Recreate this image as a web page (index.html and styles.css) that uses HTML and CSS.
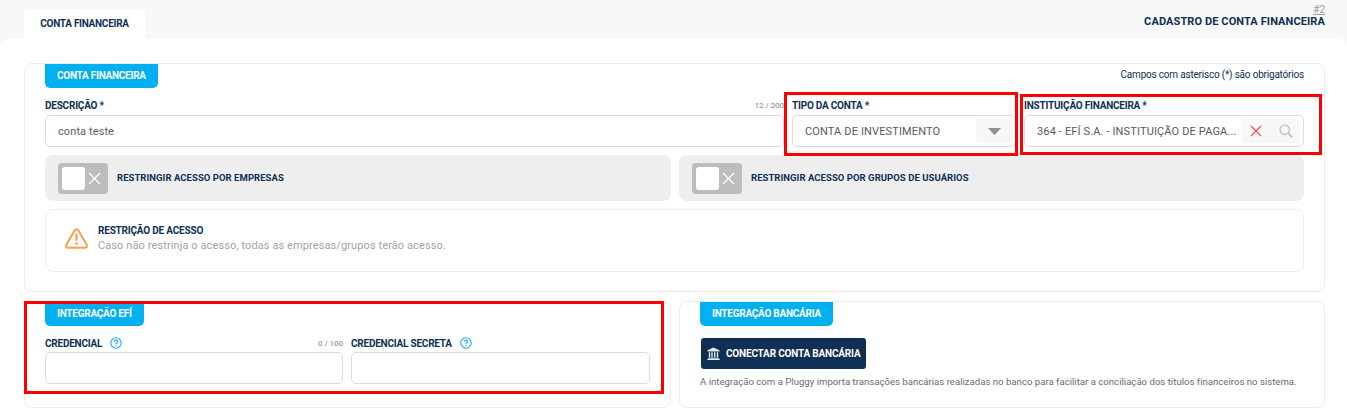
FILE: index.html
```html
<!DOCTYPE html>
<html lang="pt-BR">
<head>
<meta charset="utf-8">
<title>Cadastro de conta financeira</title>
<link rel="stylesheet" href="styles.css">
</head>
<body>
<div class="topbar">
  <div class="tab">CONTA FINANCEIRA</div>
  <div class="page-title">
    <a class="page-id">#2</a>
    <div class="page-name">CADASTRO DE CONTA FINANCEIRA</div>
  </div>
</div>
<main class="main">
  <section class="panel panel-account">
    <div class="panel-head">
      <div class="badge">CONTA FINANCEIRA</div>
      <div class="required-note">Campos com asterisco (*) são obrigatórios</div>
    </div>
    <div class="fields">
      <div class="field">
        <div class="label-row"><span class="label">DESCRIÇÃO *</span><span class="counter">12 / 200</span></div>
        <div class="input">conta teste</div>
      </div>
      <div class="field">
        <div class="label-row"><span class="label">TIPO DA CONTA *</span></div>
        <div class="input input-upper">
          <span class="value">CONTA DE INVESTIMENTO</span>
          <span class="select-arrow"><svg width="13" height="7" viewBox="0 0 13 7"><path d="M0 0h13L6.5 7z" fill="#8f8f8f"/></svg></span>
        </div>
      </div>
      <div class="field">
        <div class="label-row"><span class="label">INSTITUIÇÃO FINANCEIRA *</span></div>
        <div class="input input-upper input-bank">
          <span class="value">364 - EFÍ S.A. - INSTITUIÇÃO DE PAGA...</span>
          <span class="actions">
            <svg width="12" height="12" viewBox="0 0 12 12"><path d="M1 1l10 10M11 1L1 11" stroke="#f5545c" stroke-width="1.3" fill="none"/></svg>
            <svg width="14" height="14" viewBox="0 0 14 14"><circle cx="5.7" cy="5.7" r="4.7" stroke="#b5b5b5" stroke-width="1.1" fill="none"/><path d="M9.2 9.2l4 4" stroke="#b5b5b5" stroke-width="1.6"/></svg>
          </span>
        </div>
      </div>
    </div>
    <div class="toggles">
      <div class="toggle-row">
        <div class="switch"><span class="knob"></span><svg width="13" height="13" viewBox="0 0 13 13"><path d="M1 1l11 11M12 1L1 12" stroke="#fff" stroke-width="1.2"/></svg></div>
        <span class="toggle-label">RESTRINGIR ACESSO POR EMPRESAS</span>
      </div>
      <div class="toggle-row">
        <div class="switch"><span class="knob"></span><svg width="13" height="13" viewBox="0 0 13 13"><path d="M1 1l11 11M12 1L1 12" stroke="#fff" stroke-width="1.2"/></svg></div>
        <span class="toggle-label">RESTRINGIR ACESSO POR GRUPOS DE USUÁRIOS</span>
      </div>
    </div>
    <div class="notice">
      <svg class="notice-icon" width="23" height="21" viewBox="0 0 23 21"><path d="M9.8 2.3Q11.5 0 13.2 2.3L21.6 16.6Q22.7 19.6 19.8 19.8H3.2Q.3 19.6 1.4 16.6Z" fill="none" stroke="#f8a050" stroke-width="2" stroke-linejoin="round"/><path d="M11.5 6.5v5.5" stroke="#f8a050" stroke-width="2.2" stroke-linecap="round"/><circle cx="11.5" cy="15.5" r="1.3" fill="#f8a050"/></svg>
      <div>
        <div class="notice-title">RESTRIÇÃO DE ACESSO</div>
        <div class="notice-text">Caso não restrinja o acesso, todas as empresas/grupos terão acesso.</div>
      </div>
    </div>
  </section>
  <div class="lower">
    <section class="panel panel-lower">
      <div class="badge">INTEGRAÇÃO EFÍ</div>
      <div class="cred-grid">
        <div class="field">
          <div class="label-row label-row-cred"><span class="label">CREDENCIAL<svg class="help" width="12" height="12" viewBox="0 0 12 12"><circle cx="6" cy="6" r="5.2" fill="none" stroke="#16aeea" stroke-width="1.1"/><path d="M4.4 4.6Q4.5 3.1 6 3.1T7.7 4.5Q7.7 5.3 6.9 5.8T6 7.2" fill="none" stroke="#16aeea" stroke-width="1.1"/><circle cx="6" cy="8.9" r=".7" fill="#16aeea"/></svg></span><span class="counter">0 / 100</span></div>
          <div class="input"></div>
        </div>
        <div class="field">
          <div class="label-row label-row-cred"><span class="label">CREDENCIAL SECRETA<svg class="help" width="12" height="12" viewBox="0 0 12 12"><circle cx="6" cy="6" r="5.2" fill="none" stroke="#16aeea" stroke-width="1.1"/><path d="M4.4 4.6Q4.5 3.1 6 3.1T7.7 4.5Q7.7 5.3 6.9 5.8T6 7.2" fill="none" stroke="#16aeea" stroke-width="1.1"/><circle cx="6" cy="8.9" r=".7" fill="#16aeea"/></svg></span></div>
          <div class="input"></div>
        </div>
      </div>
    </section>
    <section class="panel panel-lower">
      <div class="badge">INTEGRAÇÃO BANCÁRIA</div>
      <button class="connect" type="button">
        <svg width="13" height="13" viewBox="0 0 13 13" fill="#e8edf2"><path d="M6.5 0.5L12.5 3.2V4.4H.5V3.2z"/><path d="M1.8 5.2h1.4v5H1.8zM4.3 5.2h1.4v5H4.3zM7 5.2h1.4v5H7zM9.8 5.2h1.4v5H9.8zM1 10.8h11v.9H1zM.3 12h12.4v1H.3z"/></svg>
        CONECTAR CONTA BANCÁRIA
      </button>
      <p class="help-text">A integração com a Pluggy importa transações bancárias realizadas no banco para facilitar a conciliação dos títulos financeiros no sistema.</p>
    </section>
  </div>
</main>
<div class="mark mark-type"></div>
<div class="mark mark-bank"></div>
<div class="mark mark-efi"></div>
</body>
</html>
```

FILE: styles.css
```css
* { box-sizing: border-box; }
html, body { margin: 0; padding: 0; height: 408px; overflow: hidden; }
body { position: relative; background: #f8f8f8; font-family: Roboto, "Liberation Sans", sans-serif; color: #0f2f54; }

.topbar { height: 39px; display: flex; justify-content: space-between; align-items: flex-end; padding: 0 22px 0 24px; }
.tab { width: 121px; height: 30px; background: #fff; border-radius: 5px 5px 0 0; font-size: 10px; font-weight: 700; letter-spacing: -.27px; display: flex; align-items: center; justify-content: center; padding-bottom: 1px; }
.page-title { text-align: right; height: 30px; margin-bottom: 5px; }
.page-id { display: block; font-size: 10px; line-height: 11px; color: #9a9a9a; text-decoration: underline; }
.page-name { font-size: 11px; line-height: 13px; font-weight: 700; letter-spacing: .1px; }

.main { background: #fff; border-radius: 8px 8px 0 0; height: 369px; padding: 24px 22px 0 24px; display: flex; flex-direction: column; gap: 9px; }
.panel { border: 1px solid #ececec; border-radius: 8px; background: #fff; padding: 0 20px; flex: none; }
.panel-account { height: 229px; }
.panel-head { display: flex; justify-content: space-between; height: 32px; }
.badge { display: inline-block; height: 24px; line-height: 24px; padding: 0 12px; background: #00b0f0; color: #fff; font-size: 10px; font-weight: 700; letter-spacing: -.25px; border-radius: 0 0 5px 5px; }
.required-note { font-size: 10px; line-height: 22px; letter-spacing: -.2px; }

.fields { display: grid; grid-template-columns: 739px 224px 280px; gap: 8px; }
.field { min-width: 0; }
.label-row { display: flex; justify-content: space-between; align-items: center; height: 19px; padding-bottom: 1px; }
.label-row-cred { height: 18px; padding-bottom: 0; }
.label { font-size: 10px; font-weight: 700; letter-spacing: -.22px; display: flex; align-items: center; }
.counter { font-size: 8px; font-weight: 500; color: #9a9a9a; letter-spacing: -.05px; }
.input { height: 32px; border: 1px solid #dcdcdc; border-radius: 5px; background: #fff; font-size: 11px; color: #5a5a5a; letter-spacing: .1px; display: flex; align-items: center; padding: 0 12px; }
.input-upper { justify-content: space-between; padding-right: 3px; }
.value { white-space: nowrap; letter-spacing: .14px; }
.select-arrow { width: 36px; height: 24px; background: #f7f7f7; border-radius: 4px; display: flex; align-items: center; justify-content: center; flex: none; }
.actions { width: 58px; height: 24px; background: #f7f7f7; border-radius: 4px; display: flex; align-items: center; justify-content: space-between; padding: 0 7px 0 8px; flex: none; }

.toggles { display: grid; grid-template-columns: 626px 625px; gap: 8px; margin-top: 8px; }
.toggle-row { height: 46px; background: #eeeeee; border-radius: 8px; display: flex; align-items: center; padding-left: 13px; gap: 9px; }
.switch { width: 50px; height: 31px; background: #bdbdbd; border-radius: 4px; display: flex; align-items: center; padding: 0 7px 0 4px; justify-content: space-between; }
.knob { width: 23px; height: 23px; background: #fff; border-radius: 3px; }
.toggle-label { font-size: 9.5px; font-weight: 700; letter-spacing: .05px; line-height: 14px; margin-bottom: 1px; }

.notice { height: 63px; margin-top: 8px; border: 1px solid #ececec; border-radius: 8px; display: flex; align-items: center; padding: 0 0 4px 19px; gap: 10px; }
.notice-icon { flex: none; }
.notice-title { font-size: 10px; font-weight: 700; line-height: 15px; letter-spacing: -.2px; }
.notice-text { font-size: 11px; line-height: 16px; color: #a3a3a3; letter-spacing: .1px; }

.lower { display: grid; grid-template-columns: 647px 646px; gap: 8px; height: 107px; flex: none; }
.panel-lower { height: 107px; }
.cred-grid { display: grid; grid-template-columns: 298px 299px; gap: 8px; margin-top: 8px; }
.help { margin-left: 8px; }

.connect { display: flex; align-items: center; gap: 6px; width: 165px; height: 31px; margin: 12px 0 0 1px; padding: 0 0 0 6px; border: 0; border-radius: 3px; background: #0f2f54; color: #fff; font-family: inherit; font-size: 10px; font-weight: 700; letter-spacing: -.18px; }
.help-text { margin: 6px 0 0; font-size: 9.6px; line-height: 14px; color: #6c6c6c; letter-spacing: .005px; white-space: nowrap; }

.mark { position: absolute; border: 3px solid #f00; pointer-events: none; }
.mark-type { left: 784px; top: 92px; width: 234px; height: 64px; }
.mark-bank { left: 1020px; top: 94px; width: 302px; height: 61px; }
.mark-efi { left: 24px; top: 301px; width: 640px; height: 93px; }
```
